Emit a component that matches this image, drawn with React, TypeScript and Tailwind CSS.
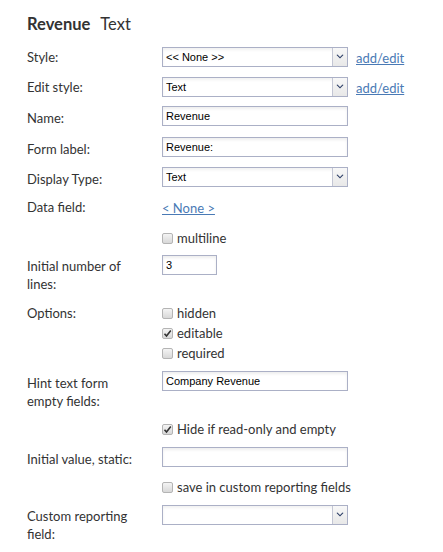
import React from "react";

const labelCls = "text-[13px] leading-[18px] text-[#333333]";
const ctrlFont = { fontFamily: '"Liberation Sans", Tahoma, Arial, sans-serif' };

function Arrow() {
  return (
    <svg width="8" height="6" viewBox="0 0 8 6">
      <path d="M0.5 1 L4 4.5 L7.5 1 L6.5 0.5 L4 3 L1.5 0.5 Z" fill="#2c3e66" />
    </svg>
  );
}

function Select({ value, width = 186 }: { value: string; width?: number }) {
  return (
    <div
      className="flex h-[20px] border border-[#abb0c6] bg-white shadow-[inset_0_2px_3px_rgba(0,0,0,0.06)]"
      style={{ width }}
    >
      <div className="flex-1 pl-[3px] text-[11px] leading-[18px] text-black" style={ctrlFont}>
        {value}
      </div>
      <div className="flex w-[15px] items-center justify-center border-l border-[#c3c6d4] bg-gradient-to-b from-[#f8f8f8] to-[#e8e8e8]">
        <Arrow />
      </div>
    </div>
  );
}

function Input({ value, width = 186 }: { value: string; width?: number }) {
  return (
    <div
      className="h-[20px] border border-[#abb0c6] bg-white pl-[3px] text-[11px] leading-[18px] text-black shadow-[inset_0_2px_3px_rgba(0,0,0,0.07)]"
      style={{ width, ...ctrlFont }}
    >
      {value}
    </div>
  );
}

function Check({ checked = false, label }: { checked?: boolean; label: string }) {
  return (
    <div className="flex h-[18px] items-center">
      <span className="flex h-[11px] w-[11px] items-center justify-center rounded-[2px] border border-[#b4b4b4] bg-gradient-to-b from-[#f4f4f4] to-[#d8d8d8]">
        {checked && (
          <svg width="9" height="9" viewBox="0 0 9 9">
            <path d="M1.5 4.8 L3.5 7 L7.8 1.5" stroke="#333" strokeWidth="1.6" fill="none" />
          </svg>
        )}
      </span>
      <span className={`ml-[4px] ${labelCls}`}>{label}</span>
    </div>
  );
}

function Row({
  label,
  children,
  mt,
  h,
  labelPt = 1,
}: {
  label?: React.ReactNode;
  children: React.ReactNode;
  mt: number;
  h: number;
  labelPt?: number;
}) {
  return (
    <div className="grid grid-cols-[135px_1fr] items-start" style={{ marginTop: mt, height: h }}>
      <div className={labelCls} style={{ paddingTop: labelPt }}>
        {label}
      </div>
      <div className="flex flex-col">{children}</div>
    </div>
  );
}

function Link({ children }: { children: React.ReactNode }) {
  return (
    <span className="text-[13px] leading-[18px] text-[#4a7ab5] underline underline-offset-[1px]">
      {children}
    </span>
  );
}

export default function App() {
  return (
    <div
      className="h-[552px] w-[443px] overflow-hidden bg-white pl-[27px] pt-[13px]"
      style={{ fontFamily: 'Lato, "Open Sans", sans-serif' }}
    >
      <div className="h-[22px] text-[16.5px] leading-[22px] text-[#333333]">
        <span className="font-bold">Revenue</span>
        <span className="ml-[10px]">Text</span>
      </div>
      <Row label="Style:" mt={10} h={20} labelPt={3}>
        <div className="flex items-center">
          <Select value="<< None >>" />
          <span className="ml-[8px]">
            <Link>add/edit</Link>
          </span>
        </div>
      </Row>
      <Row label="Edit style:" mt={10} h={20} labelPt={3}>
        <div className="flex items-center">
          <Select value="Text" />
          <span className="ml-[8px]">
            <Link>add/edit</Link>
          </span>
        </div>
      </Row>
      <Row label="Name:" mt={11} h={20} labelPt={3}>
        <Input value="Revenue" />
      </Row>
      <Row label="Form label:" mt={11} h={20} labelPt={3}>
        <Input value="Revenue:" />
      </Row>
      <Row label="Display Type:" mt={10} h={20} labelPt={3}>
        <Select value="Text" />
      </Row>
      <Row label="Data field:" mt={8} h={18} labelPt={3}>
        <div>
          <Link>&lt; None &gt;</Link>
        </div>
      </Row>
      <Row mt={16} h={18}>
        <Check label="multiline" />
      </Row>
      <Row label={<>Initial number of<br />lines:</>} mt={8} h={20} labelPt={2}>
        <Input value="3" width={55} />
      </Row>
      <Row label="Options:" mt={29} h={58} labelPt={0}>
        <Check label="hidden" />
        <div className="mt-[2px]">
          <Check checked label="editable" />
        </div>
        <div className="mt-[2px]">
          <Check label="required" />
        </div>
      </Row>
      <Row label={<>Hint text form<br />empty fields:</>} mt={9} h={20} labelPt={3}>
        <Input value="Company Revenue" />
      </Row>
      <Row mt={29} h={18}>
        <Check checked label="Hide if read-only and empty" />
      </Row>
      <Row label="Initial value, static:" mt={9} h={20} labelPt={3}>
        <Input value="" />
      </Row>
      <Row mt={11} h={18}>
        <Check label="save in custom reporting fields" />
      </Row>
      <Row label={<>Custom reporting<br />field:</>} mt={9} h={20} labelPt={2}>
        <Select value="" />
      </Row>
    </div>
  );
}
